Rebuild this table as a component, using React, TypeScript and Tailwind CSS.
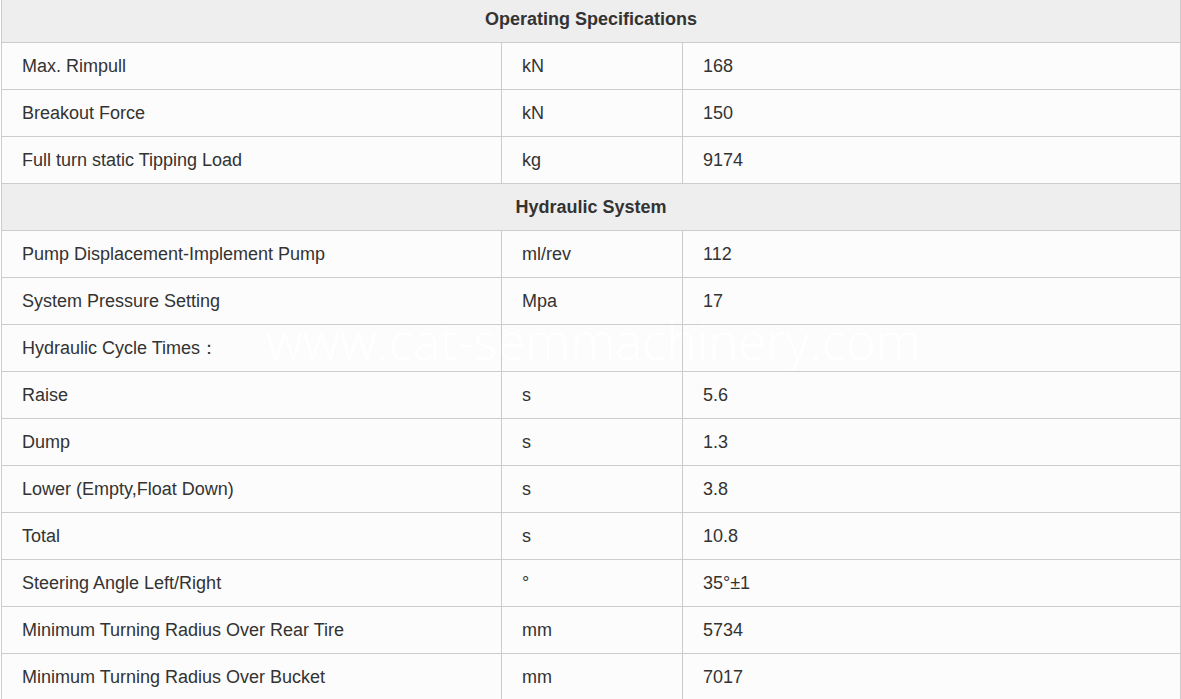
import React from "react";

type Row = { type: "h"; label: string } | { type: "r"; a: string; b: string; c: string };

const rows: Row[] = [
  { type: "h", label: "Operating Specifications" },
  { type: "r", a: "Max. Rimpull", b: "kN", c: "168" },
  { type: "r", a: "Breakout Force", b: "kN", c: "150" },
  { type: "r", a: "Full turn static Tipping Load", b: "kg", c: "9174" },
  { type: "h", label: "Hydraulic System" },
  { type: "r", a: "Pump Displacement-Implement Pump", b: "ml/rev", c: "112" },
  { type: "r", a: "System Pressure Setting", b: "Mpa", c: "17" },
  { type: "r", a: "Hydraulic Cycle Times：", b: "", c: "" },
  { type: "r", a: "Raise", b: "s", c: "5.6" },
  { type: "r", a: "Dump", b: "s", c: "1.3" },
  { type: "r", a: "Lower (Empty,Float Down)", b: "s", c: "3.8" },
  { type: "r", a: "Total", b: "s", c: "10.8" },
  { type: "r", a: "Steering Angle Left/Right", b: "°", c: "35°±1" },
  { type: "r", a: "Minimum Turning Radius Over Rear Tire", b: "mm", c: "5734" },
  { type: "r", a: "Minimum Turning Radius Over Bucket", b: "mm", c: "7017" },
];

export default function App() {
  return (
    <div className="w-[1181px] h-[699px] overflow-hidden bg-white">
      <div className="relative pl-[1px] -mt-[5px]" style={{ fontFamily: '"Liberation Sans", Arial, sans-serif' }}>
        <div
          className="absolute left-[266px] top-[320px] text-[51px] font-light text-white pointer-events-none whitespace-nowrap leading-none z-10"
          style={{ fontFamily: '"Open Sans", sans-serif' }}
        >
          www.cat-semmachinery.com
        </div>
        <div className="relative w-[1180px] border-l border-r border-t border-[#cccccc] text-[18px] text-[#333333] bg-[#fcfcfc]">
          {rows.map((r, i) =>
            r.type === "h" ? (
              <div key={i} className="relative z-20 h-[47px] border-b border-[#cccccc] bg-[#eeeeee] flex items-center justify-center font-bold">
                {r.label}
              </div>
            ) : (
              <div key={i} className="relative z-20 h-[47px] border-b border-[#cccccc] flex">
                <div className="w-[500px] border-r border-[#cccccc] px-5 flex items-center">{r.a}</div>
                <div className="w-[181px] border-r border-[#cccccc] px-5 flex items-center">{r.b}</div>
                <div className="flex-1 px-5 flex items-center">{r.c}</div>
              </div>
            )
          )}
        </div>
      </div>
    </div>
  );
}
